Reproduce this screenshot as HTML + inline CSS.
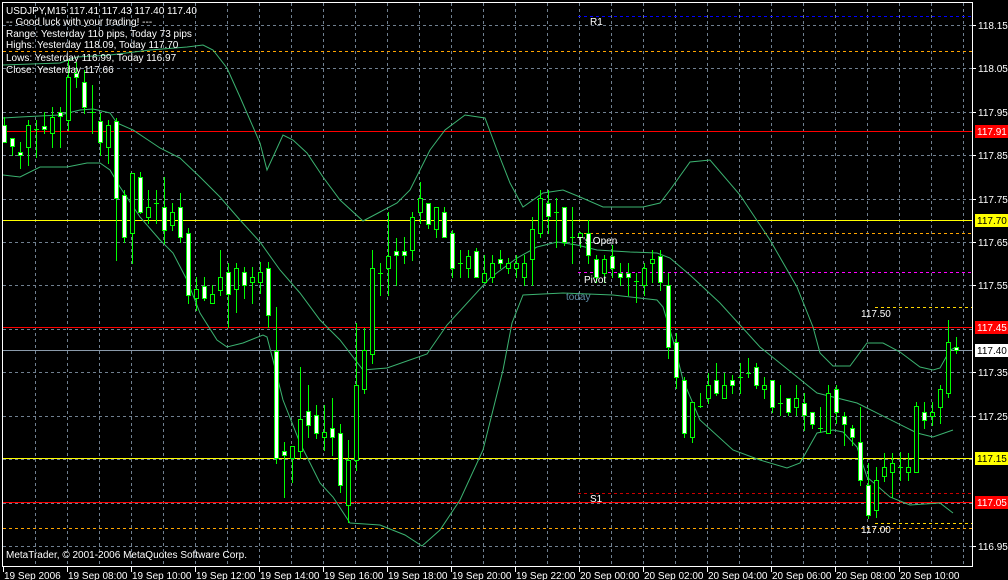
<!DOCTYPE html>
<html><head><meta charset="utf-8"><style>
html,body{margin:0;padding:0;background:#000;width:1008px;height:580px;overflow:hidden}
svg{display:block}
text{font-family:"Liberation Sans",sans-serif;font-size:10px;fill:#fff}
</style></head><body>
<svg id="s" width="1008" height="580" viewBox="0 0 1008 580" xmlns="http://www.w3.org/2000/svg" shape-rendering="crispEdges">
<rect width="1008" height="580" fill="#000"/>
<g id="grid" stroke="#708090" stroke-width="1" stroke-dasharray="3,3"></g>
<g id="lv"></g>
<g id="bands" fill="none" stroke="#3cb371" stroke-width="1" shape-rendering="auto"></g>
<g id="cd"></g>
<rect x="2.5" y="2.5" width="970" height="564" fill="none" stroke="#fff"/>
<g id="ax"></g>
<text x="6" y="14">USDJPY,M15  117.41 117.43 117.40 117.40</text>
<text x="6" y="25">-- Good luck with your trading! ---</text>
<text x="6" y="37">Range: Yesterday 110 pips, Today 73 pips</text>
<text x="6" y="48">Highs: Yesterday 118.09, Today 117.70</text>
<text x="6" y="61">Lows:  Yesterday 116.99, Today 116.97</text>
<text x="6" y="73">Close: Yesterday 117.66</text>
<text x="590" y="25">R1</text>
<text x="590" y="502">S1</text>
<text x="577" y="244">T's Open</text>
<text x="584" y="283">Pivot</text>
<text x="566" y="300" style="fill:#5f8fa8">today</text>
<text x="861" y="317">117.50</text>
<text x="861" y="533">117.00</text>
<text x="6" y="558">MetaTrader, © 2001-2006 MetaQuotes Software Corp.</text>
</svg>
<script>
var NS="http://www.w3.org/2000/svg";
function el(p,t,a,txt){var e=document.createElementNS(NS,t);for(var k in a)e.setAttribute(k,a[k]);if(txt)e.textContent=txt;document.getElementById(p).appendChild(e);return e;}
for(var x=35;x<972;x+=32)el("grid","line",{x1:x+.5,y1:3,x2:x+.5,y2:566});
var gy=[25,68,112,155,199,242,285,329,372,416,459,503,546];
gy.forEach(function(y){el("grid","line",{x1:3,y1:y+.5,x2:972,y2:y+.5});});
function L(y,x1,c,d){var a={x1:x1,y1:y+.5,x2:972,y2:y+.5,stroke:c};if(d)a["stroke-dasharray"]=d;el("lv","line",a);}
L(16,578,"#0000ff","3,3");L(51,3,"#ffa500","3,3");L(131,3,"#ff0000");L(220,3,"#ffff00");
L(233,578,"#ffa500","3,3");L(272,578,"#ff00ff","3,3");L(307,875,"#ffd700","3,3");
L(327,3,"#ff0000");L(350,3,"#8a9aaa");L(458,3,"#ffff00");L(493,578,"#cc0000","3,3");
L(502,3,"#ff0000");L(523,875,"#ffd700","3,3");L(528,3,"#ffa500","3,3");
var up=[[3,65],[60,63],[77,57],[110,55],[150,50],[187,47],[203,45],[213,50],[227,68],[240,97],[260,143],[267,170],[283,135],[293,140],[307,153],[323,177],[340,200],[363,221],[380,212],[397,203],[410,190],[430,150],[445,130],[465,115],[485,118],[497,150],[510,183],[523,207],[543,193],[563,190],[580,197],[603,207],[643,207],[660,203],[670,190],[690,162],[710,160],[740,195],[770,240],[797,287],[813,327],[820,353],[833,366],[850,366],[867,343],[883,343],[900,352],[920,367],[933,370],[940,368],[950,350],[957,347]];
var ma=[[3,118],[20,117],[60,115],[80,110],[93,109],[110,113],[117,123],[133,130],[160,148],[180,158],[200,177],[220,197],[240,220],[260,242],[280,270],[300,293],[320,320],[340,340],[363,370],[387,368],[427,354],[447,325],[490,278],[517,258],[537,247],[557,242],[577,245],[597,250],[630,252],[657,253],[670,258],[690,275],[720,303],[760,347],[817,393],[857,403],[917,433],[933,437],[953,430]];
var lo=[[3,175],[20,177],[40,167],[67,167],[87,163],[100,163],[110,170],[120,187],[140,217],[160,240],[173,253],[187,280],[200,313],[217,340],[227,347],[243,343],[263,335],[267,337],[273,360],[283,400],[300,443],[320,483],[333,497],[350,523],[380,525],[405,535],[422,546],[440,530],[460,500],[483,450],[503,370],[512,323],[523,295],[563,293],[613,295],[657,300],[663,307],[673,340],[683,380],[700,420],[733,450],[760,460],[787,468],[800,463],[817,433],[833,430],[843,432],[857,447],[867,477],[890,497],[910,505],[940,503],[953,513]];
[up,ma,lo].forEach(function(p){el("bands","polyline",{points:p.map(function(q){return q.join(",")}).join(" ")});});
var C=[[125,142,117,142,1],[138,146,138,155,1],[152,155,142,168,1],[125,147,120,165,0],[129,129,120,157,2],[126,129,112,133,1],[117,133,107,147,0],[112,116,107,147,1],[77,120,60,130,0],[73,77,62,87,1],[82,107,70,113,1],[112,112,85,133,2],[121,142,113,155,1],[125,147,120,163,0],[121,198,118,260,1],[195,237,190,242,1],[173,233,173,263,0],[177,212,172,213,1],[207,217,190,223,0],[203,203,190,223,2],[207,230,177,243,1],[212,225,203,230,0],[207,237,193,242,1],[233,295,228,303,1],[289,298,277,310,0],[286,298,277,300,1],[294,303,285,303,0],[277,290,250,295,0],[272,294,263,327,1],[268,289,263,312,0],[272,285,267,298,1],[277,282,267,303,0],[272,282,262,293,0],[268,315,262,327,1],[351,458,307,463,1],[451,455,442,497,1],[446,458,446,482,0],[419,451,367,458,0],[411,425,385,437,1],[415,433,405,438,1],[432,437,405,450,0],[428,437,398,455,1],[433,485,424,492,1],[460,505,440,522,0],[385,460,323,470,0],[350,389,328,393,0],[268,354,250,363,0],[273,273,263,295,2],[256,268,212,295,0],[251,255,238,285,1],[251,255,237,263,1],[217,250,212,260,0],[198,212,182,223,0],[203,224,203,228,1],[207,229,207,237,0],[212,237,207,237,1],[233,268,230,277,1],[263,263,250,277,2],[256,268,250,277,0],[251,277,248,277,1],[273,282,255,282,0],[263,277,255,282,0],[259,263,250,268,1],[263,268,258,273,0],[263,268,255,277,0],[263,277,255,285,0],[229,259,217,285,0],[198,233,190,237,0],[203,216,190,233,1],[212,212,198,247,2],[207,242,207,245,1],[237,237,207,263,2],[233,237,232,247,0],[233,255,220,263,1],[259,277,255,282,1],[259,273,255,282,0],[256,268,245,277,1],[273,277,263,285,1],[273,277,263,295,1],[281,281,273,302,2],[268,285,263,295,0],[259,263,250,282,0],[256,282,250,290,1],[285,347,273,358,1],
[342,377,333,388,1],[380,433,377,437,1],[402,437,402,442,0],[406,406,393,407,2],[385,398,373,403,0],[380,393,363,395,1],[385,398,373,398,0],[380,385,375,393,1],[377,377,363,393,2],[373,373,358,377,2],[367,385,363,388,1],[385,389,377,398,0],[380,407,380,412,1],[403,403,385,415,2],[398,412,398,415,1],[398,407,385,415,0],[403,415,393,430,1],[412,424,412,428,1],[428,428,407,432,2],[393,433,385,433,0],[389,412,385,423,1],[416,424,412,445,1],[428,437,425,445,1],[442,480,407,485,1],[485,515,463,518,1],[480,510,467,517,0],[467,476,453,481,0],[463,472,453,497,0],[467,467,452,480,2],[467,472,453,480,0],[406,472,402,472,0],[412,420,402,428,1],[412,416,402,425,0],[389,407,385,423,0],[342,393,320,397,0],[347,350,337,353,1]];
C.forEach(function(c,k){var x=4+8*k;
 el("cd","line",{x1:x+.5,y1:c[2],x2:x+.5,y2:c[3]+1,stroke:"#00ff00"});
 if(c[4]==2){el("cd","line",{x1:x-2,y1:c[0]+.5,x2:x+3,y2:c[0]+.5,stroke:"#00ff00"});}
 else{var h=Math.max(c[1]-c[0],3);el("cd","rect",{x:x-1.5,y:c[0]+.5,width:4,height:h,fill:c[4]?"#fff":"#000",stroke:"#00ff00"});}
});
var al=[[25,"118.15"],[68,"118.05"],[112,"117.95"],[155,"117.85"],[199,"117.75"],[242,"117.65"],[285,"117.55"],[372,"117.35"],[416,"117.25"],[546,"116.95"]];
al.forEach(function(a){el("ax","line",{x1:973,y1:a[0]+.5,x2:976,y2:a[0]+.5,stroke:"#fff"});el("ax","text",{x:978,y:a[0]+4},a[1]);});
var bl=[[131,"117.91","#ff0000","#fff"],[220,"117.70","#ffff00","#000"],[327,"117.45","#ff0000","#fff"],[350,"117.40","#fff","#000"],[458,"117.15","#ffff00","#000"],[502,"117.05","#ff0000","#fff"]];
bl.forEach(function(a){el("ax","rect",{x:975,y:a[0]-6,width:33,height:13,fill:a[2]});var t=el("ax","text",{x:977,y:a[0]+4},a[1]);t.style.fill=a[3];});
var tl=["19 Sep 2006","19 Sep 08:00","19 Sep 10:00","19 Sep 12:00","19 Sep 14:00","19 Sep 16:00","19 Sep 18:00","19 Sep 20:00","19 Sep 22:00","20 Sep 00:00","20 Sep 02:00","20 Sep 04:00","20 Sep 06:00","20 Sep 08:00","20 Sep 10:00"];
tl.forEach(function(s,i){var x=3+64*i;el("ax","line",{x1:x+.5,y1:567,x2:x+.5,y2:572,stroke:"#fff"});el("ax","text",{x:x+1,y:579},s);});
</script>
</body></html>
